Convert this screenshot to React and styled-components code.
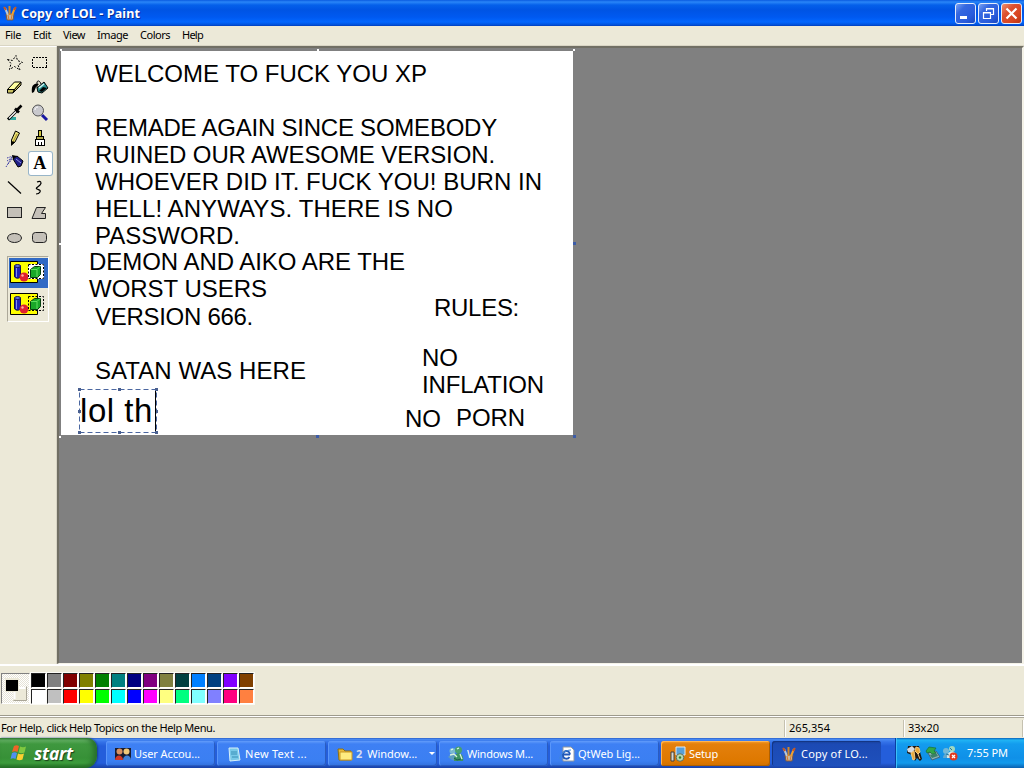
import React, { useLayoutEffect, useRef, useState } from 'react';
import styled, { createGlobalStyle, css } from 'styled-components';

const Global = createGlobalStyle`
  * { box-sizing: border-box; }
  body { margin: 0; overflow: hidden; background: #ece9d8; }
`;

const ui = '"Noto Sans", "Open Sans", sans-serif';

const LabelText = styled.span`
  display: inline-block;
  white-space: pre;
  flex: none;
`;

// Text tracked so that its advance equals a given width.
function Label({ w, children, ...rest }) {
  const ref = useRef(null);
  const [gap, setGap] = useState(0);
  useLayoutEffect(() => {
    const natural = ref.current.getBoundingClientRect().width;
    setGap((w - natural) / children.length);
  }, []);
  return <LabelText ref={ref} style={{ letterSpacing: gap }} {...rest}>{children}</LabelText>;
}

const Screen = styled.div`
  width: 1024px;
  height: 768px;
  display: flex;
  flex-direction: column;
  background: #ece9d8;
  font: 11px/14px ${ui};
  color: #000;
  overflow: hidden;
`;

const TitleBar = styled.header`
  height: 26px;
  flex: none;
  display: flex;
  align-items: center;
  padding: 0 2px 0 2px;
  background: linear-gradient(#0a5be0 0, #2a86f8 2px, #0560ea 5px, #0054e4 10px, #0059f0 17px, #0266fe 22px, #0050d8 25px, #003ab8 26px);
  color: #fff;
`;
const TitleText = styled.h1`
  flex: 1;
  margin: 0 0 0 3px;
  padding-top: 2px;
  font: bold 12.5px/20px "Noto Sans", "Open Sans", sans-serif;
  text-shadow: 1px 1px 0 #0a2c90;
`;
const TitleButton = styled.div`
  width: 21px;
  height: 21px;
  margin-left: 2px;
  border: 1px solid #e4ecfb;
  border-radius: 3px;
  background: ${(p) => (p.$close
    ? 'linear-gradient(135deg, #ee9070 0, #dc5030 35%, #d84520 70%, #b83412 100%)'
    : 'linear-gradient(135deg, #7aa2f4 0, #3568e0 30%, #2a5cdc 70%, #1a48c0 100%)')};
  svg { display: block; }
`;

const MenuBar = styled.nav`
  height: 20px;
  flex: none;
  display: flex;
  padding: 2px 0 0 5px;
  gap: 12px;
  border-bottom: 1px solid #d9d5c4;
`;

const Work = styled.div`
  height: 618px;
  flex: none;
  display: flex;
`;
const ToolBox = styled.aside`
  width: 57px;
  flex: none;
  padding: 4px 0 0 3px;
  border-top: 1px solid #fff;
  border-right: 1px solid #d8d4c4;
`;
const ToolGrid = styled.div`
  display: grid;
  grid-template-columns: 25px 25px;
  grid-auto-rows: 25px;
`;
const Tool = styled.div`
  border-radius: 3px;
  ${(p) => p.$active && css`
    background: #fff;
    box-shadow: inset 0 0 0 1px #98b5c8;
  `}
  svg { display: block; }
`;
const Options = styled.div`
  width: 42px;
  height: 66px;
  margin: 5px 0 0 4px;
  border: 1px solid;
  border-color: #aca899 #fff #fff #aca899;
  padding: 1px 0 0 1px;
`;
const Option = styled.div`
  height: 30px;
  margin-bottom: 2px;
  background: ${(p) => (p.$active ? '#316ac5' : 'transparent')};
  svg { display: block; }
`;

const Desk = styled.main`
  flex: 1;
  border-top: 2px solid #716f64;
  border-left: 2px solid #716f64;
  border-right: 2px solid #f4f2e8;
  border-bottom: 1px solid #f4f2e8;
  background: #808080;
  padding: 3px 0 0 2px;
`;
const Sheet = styled.div`
  position: relative;
  width: 512px;
  height: 384px;
  background: #fff;
  font: 24px/27px "Liberation Sans", Arial, sans-serif;
`;
const Placed = styled.div`
  position: absolute;
  left: ${(p) => p.$x - 61}px;
  top: ${(p) => p.$base - 73}px;
`;
const Big = styled(Placed)`
  font-size: 33px;
  line-height: 38px;
  top: 341px;
  left: 19px;
`;
const Caret = styled.i`
  position: absolute;
  left: 94px;
  top: 340px;
  width: 1px;
  height: 40px;
  background: #000;
`;
const Marquee = styled.div`
  position: absolute;
  left: 17px;
  top: 337px;
  width: 80px;
  height: 46px;
  svg { display: block; }
`;
const Handle = styled.i`
  position: absolute;
  left: ${(p) => p.$x - 61}px;
  top: ${(p) => p.$y - 51}px;
  width: ${(p) => (p.$blue ? 3 : 2)}px;
  height: ${(p) => (p.$blue ? 3 : 2)}px;
  background: ${(p) => (p.$blue ? '#3c5ca8' : '#fff')};
`;

const ColorBar = styled.section`
  height: 51px;
  flex: none;
  display: flex;
  border-top: 2px solid #fff;
  padding: 7px 0 0 1px;
`;
const Current = styled.div`
  width: 29px;
  height: 31px;
  border: 1px solid;
  border-color: #808080 #fff #fff #808080;
  background: repeating-conic-gradient(#fff 0 25%, #e6e3d6 0 50%) 0 0 / 2px 2px;
  svg { display: block; }
`;
const Swatches = styled.div`
  display: grid;
  grid-template-columns: repeat(14, 16px);
  grid-auto-rows: 16px;
  margin-left: 1px;
`;
const Swatch = styled.div`
  width: 15px;
  height: 15px;
  border: solid;
  border-width: 1px;
  border-color: #222 #fff #fff #222;
  background: ${(p) => p.$c};
  box-shadow: 0 0 0 1px #fbfaf5;
`;

const StatusBar = styled.footer`
  height: 23px;
  flex: none;
  display: flex;
  border-top: 1px solid #9d9a8c;
  box-shadow: inset 0 1px #fff, inset 0 2px #aca899;
  padding-top: 4px;
`;
const StatusCell = styled.div`
  width: ${(p) => p.$w}px;
  padding: 1px 0 0 ${(p) => p.$pad}px;
  border-right: 1px solid #c5c1b0;
  box-shadow: 1px 0 #fff;
  height: 17px;
`;

const TaskBar = styled.footer`
  height: 30px;
  flex: none;
  display: flex;
  background: linear-gradient(#1f50b8 0, #4a8cf4 1px, #3472e8 4px, #245edb 8px, #245edb 25px, #1941a5 30px);
  color: #fff;
`;
const Start = styled.div`
  width: 97px;
  display: flex;
  align-items: center;
  padding: 0 0 0 10px;
  border-radius: 0 10px 12px 0;
  background: linear-gradient(#2f7a30 0, #66b466 2px, #3f983f 6px, #379137 20px, #3c9c3c 25px, #1f6a20 30px);
  box-shadow: inset -4px 0 5px #28702c, 1px 0 2px #173c94;
`;
const StartText = styled.b`
  margin: -1px 0 0 6px;
  font: italic bold 17.5px/24px "Open Sans", "Noto Sans", sans-serif;
  text-shadow: 1px 1px 1px #1a401a;
`;
const Tasks = styled.div`
  flex: 1;
  display: flex;
  gap: 2px;
  padding: 3px 0 0 9px;
`;
const Task = styled.div`
  width: 109px;
  height: 25px;
  display: flex;
  align-items: center;
  padding-left: 9px;
  border-radius: 3px;
  white-space: nowrap;
  background: linear-gradient(#629cfa 0, #3e80f4 3px, #3b7ff2 20px, #3270dc 25px);
  box-shadow: inset -1px -1px #2a5cc0, inset 1px 0 #5a96fa;
  ${(p) => p.$kind === 'alert' && css`
    background: linear-gradient(#f8a030 0, #e4800c 3px, #de7800 20px, #d07000 25px);
    box-shadow: inset -1px -1px #b06000, inset 1px 1px #ffb450;
  `}
  ${(p) => p.$kind === 'active' && css`
    background: linear-gradient(#173f98 0, #1c4ab4 3px, #1e50bc 25px);
    box-shadow: inset 1px 1px #143684;
  `}
  svg { flex: none; margin-right: ${(p) => p.$gap ?? 3}px; }
`;
const Count = styled.span`
  color: #d5dcf0;
  font-weight: bold;
  margin-right: 5px;
`;
const Arrow = styled.i`
  margin-left: 12px;
  border: 3px solid transparent;
  border-top-color: #fff;
  border-bottom: 0;
`;
const Tray = styled.div`
  width: 129px;
  display: flex;
  align-items: center;
  gap: 2px;
  padding: 0 0 0 10px;
  border-left: 1px solid #0a3ea0;
  background: linear-gradient(#0c60b8 0, #20b4f4 2px, #139cee 6px, #0f90e8 20px, #129aec 25px, #0a60b0 30px);
  box-shadow: inset 1px 0 #3cc0f8;
`;
const Clock = styled.time`
  margin-left: 7px;
`;

const Svg = ({ s = 16, h, children, vb }) => (
  <svg width={s} height={h ?? s} viewBox={vb ?? `0 0 ${s} ${h ?? s}`} fill="none">{children}</svg>
);

const Brushes = () => (
  <Svg>
    <path d="M4 9h8l-1 6H5z" fill="#c4b8a0" stroke="#7d5a40" />
    <path d="M3 3l3 7" stroke="#b8c8d8" strokeWidth="2" />
    <path d="M7.5 1v9" stroke="#d08828" strokeWidth="2" />
    <path d="M13 3l-3 7" stroke="#f0a030" strokeWidth="2" />
    <path d="M2 2l2 3M12 5l2-3" stroke="#c85820" strokeWidth="2" />
    <path d="M6 10l1 5M10 10l-1 5" stroke="#e07828" />
  </Svg>
);

const Messenger = () => (
  <Svg>
    <circle cx="4.500" cy="5" r="3" fill="#78b8d0" />
    <path d="M0 11l4-4 4 2 1 6-5-1z" fill="#5c9cc0" />
    <circle cx="10.500" cy="4" r="3.500" fill="#48a070" />
    <path d="M10 7c4 0 6 4 5 8H6c0-4 1-7 4-8z" fill="#3c9460" />
    <path d="M2 9l4-1 3 3M12 8l2 5" stroke="#d8f0dc" strokeWidth="1.300" />
    <path d="M9 3l2-1M3 4l2-1" stroke="#e0f8e8" strokeWidth="1.300" />
    <path d="M6 12l3 2 4-1" stroke="#1c5c50" />
  </Svg>
);

const toolIcons = [
  <path d="M4.500 8.500l5 1 3.500-5 1.500 5 5 2-4.500 2.500 2 5-5.500-3.500-5 3 1.500-6z" stroke="#000" strokeDasharray="2 1.400" />,
  <rect x="4.500" y="6.500" width="14" height="10" stroke="#000" strokeDasharray="2 1" shapeRendering="crispEdges" />,
  <g stroke="#000" strokeLinejoin="round"><path d="M4.500 13.500l7-7.500h6.500l-6.500 7.500z" fill="#ffffa0" /><path d="M4.500 13.500v3.500h5.500l1.500-3.500zM11.500 13.500l6.500-7.500v3l-8 8z" fill="#c8c060" /></g>,
  <g><path d="M4 17c-1-8 2-10 7-9l-3 3-2 5z" fill="#000" /><path d="M9 12l7-6 4 6-6 5-4-1z" fill="#2a9494" stroke="#000" /><path d="M15 11l4 1-5 4-3-1z" fill="#000" /><path d="M11 12l5-4" stroke="#d8f4f0" strokeWidth="1.500" /><path d="M9 12V6c1-2 3-1 4 2" stroke="#000" /></g>,
  <g><path d="M5 17.500h8" stroke="#30a8a0" strokeWidth="3" /><path d="M5 18.500l9-9" stroke="#000" strokeWidth="3" /><path d="M6 17.500l7-7" stroke="#fff" strokeWidth="1.300" /><path d="M12 7.500l4 4M13.500 9.500l5-5" stroke="#000" strokeWidth="2.600" /></g>,
  <g><path d="M14 14l5 5" stroke="#1818a0" strokeWidth="3" /><circle cx="10" cy="9.500" r="5.500" fill="#c8c8cc" stroke="#555" /><path d="M7 9c0-2 1-3 3-3" stroke="#fff" /></g>,
  <g><path d="M8.500 14l4-9 4 2-4.500 9-3.500 3z" fill="#e8e078" stroke="#000" /><path d="M14 8l-4 8" stroke="#a89020" /><path d="M8 15l4 1-4 4z" fill="#000" /></g>,
  <g stroke="#000" shapeRendering="crispEdges"><path d="M10.500 4.500h3v6h-3z" fill="#d0c840" /><path d="M8.500 10.500h7v3h-7z" fill="#b0a850" /><path d="M7.500 13.500h9v6h-9z" fill="#fff" /><path d="M10.500 16v4M13.500 16v4" /></g>,
  <g><path d="M4 7l6-2M4 10l6-4M5 13l5-6M3 16l6-10" stroke="#4040a8" strokeDasharray="1.500 1" /><path d="M10 8l4-3 6 5-2 5-3 1z" fill="#202088" stroke="#000" /><path d="M13 8l5 4" stroke="#9090e0" /><path d="M9 4l5 1-4 3z" fill="#000" /></g>,
  <text x="5.200" y="18" fill="#000" fontFamily="Liberation Serif" fontWeight="bold" fontSize="18">A</text>,
  <path d="M5 5.500l13 12" stroke="#000" strokeWidth="1.200" />,
  <path d="M9 6c4-2 5 1 3 3s-5 3-3 4 4 1 3 3-2 2-4 2" stroke="#000" strokeWidth="1.200" />,
  <rect x="4.500" y="6.500" width="14" height="10" fill="#c4c0b8" stroke="#222" />,
  <path d="M8.500 6.500h9l-4 6h4v5h-13.500z" fill="#c4c0b8" stroke="#222" />,
  <ellipse cx="11.500" cy="12" rx="7" ry="4.500" fill="#c4c0b8" stroke="#222" />,
  <rect x="4.500" y="6.500" width="14" height="10" rx="3" fill="#c4c0b8" stroke="#222" />,
];

const OptionArt = ({ opaque }) => (
  <Svg s={40} h={30}>
    <path d="M1.500 3.500h27v21h-27z" fill="#ffff00" stroke="#000" />
    <path d="M5.500 8v10c0 3 6 3 6 0V8z" fill="#2020b8" stroke="#101050" />
    <path d="M7.500 9v10" stroke="#8090f0" />
    <ellipse cx="8.500" cy="8" rx="3" ry="1.500" fill="#6070e0" stroke="#101050" />
    <circle cx="15" cy="19" r="4.500" fill="#e02030" />
    <circle cx="13.500" cy="17.500" r="1.200" fill="#ffb0a0" />
    {opaque && <path d="M19 6h16v15H19z" fill="#fff" />}
    <path d="M19.500 6.500h15v14h-15z" stroke="#000" strokeDasharray="2 1.500" />
    <path d="M21.500 11.500l4-3h6v8l-3 3h-7z" fill="#18a828" stroke="#064010" />
    <path d="M22 11.500h6v7.500M28 11.500l3-3" stroke="#60e060" />
  </Svg>
);

const lines = [
  [95, 82, 332, 'WELCOME TO FUCK YOU XP'],
  [95, 136, 402, 'REMADE AGAIN SINCE SOMEBODY'],
  [95, 163, 400, 'RUINED OUR AWESOME VERSION.'],
  [95, 190, 447, 'WHOEVER DID IT. FUCK YOU! BURN IN'],
  [95, 217, 358, 'HELL! ANYWAYS. THERE IS NO'],
  [95, 244, 145, 'PASSWORD.'],
  [89, 270, 316, 'DEMON AND AIKO ARE THE'],
  [89, 297, 178, 'WORST USERS'],
  [95, 325, 158, 'VERSION 666.'],
  [95, 379, 211, 'SATAN WAS HERE'],
  [434, 316, 85, 'RULES:'],
  [422, 366, 36, 'NO'],
  [422, 393, 122, 'INFLATION'],
  [405, 427, 36, 'NO'],
  [456, 426, 69, 'PORN'],
];

const colors = ['#000', '#808080', '#800000', '#808000', '#008000', '#008080', '#000080', '#800080', '#808040', '#004040', '#0080ff', '#004080', '#8000ff', '#804000',
  '#fff', '#c0c0c0', '#f00', '#ff0', '#0f0', '#0ff', '#00f', '#f0f', '#ffff80', '#00ff80', '#80ffff', '#8080ff', '#ff0080', '#ff8040'];

const handles = [[60, 49], [317, 49], [573, 49], [59, 243], [573, 242, 1], [59, 436], [316, 435, 1], [573, 435, 1]];
const knobs = [[0, 0], [40, 0], [77, 0], [0, 22], [77, 22], [0, 43], [40, 43], [77, 43]];

export default function App() {
  return (
    <Screen>
      <Global />
      <TitleBar>
        <Brushes />
        <TitleText><Label w={119}>Copy of LOL - Paint</Label></TitleText>
        <TitleButton><Svg s={19}><path d="M4 13.500h7" stroke="#fff" strokeWidth="3" /></Svg></TitleButton>
        <TitleButton><Svg s={19}><path d="M7.500 7V4.500h7v6H12M7 5h8M4.500 8.500h7v6h-7zM4 9h8" stroke="#fff" strokeWidth="1.200" /></Svg></TitleButton>
        <TitleButton $close><Svg s={19}><path d="M4.500 4.500l10 10M14.500 4.500l-10 10" stroke="#fff" strokeWidth="2.200" /></Svg></TitleButton>
      </TitleBar>
      <MenuBar>
        <Label w={16}>File</Label>
        <Label w={18}>Edit</Label>
        <Label w={22}>View</Label>
        <Label w={31}>Image</Label>
        <Label w={30}>Colors</Label>
        <Label w={21}>Help</Label>
      </MenuBar>
      <Work>
        <ToolBox>
          <ToolGrid>
            {toolIcons.map((icon, i) => <Tool key={i} $active={i === 9}><Svg s={25}>{icon}</Svg></Tool>)}
          </ToolGrid>
          <Options>
            <Option $active><OptionArt opaque /></Option>
            <Option><OptionArt /></Option>
          </Options>
        </ToolBox>
        <Desk>
          <Sheet>
            {lines.map(([x, y, w, t]) => <Placed key={t + x} $x={x} $base={y}><Label w={w}>{t}</Label></Placed>)}
            <Marquee>
              <Svg s={80} h={46}>
                <path d="M1.500 1.500h77v43h-77z" stroke="#4a66a0" strokeDasharray="5 3" />
                {knobs.map(([x, y]) => <rect key={`${x}-${y}`} x={x} y={y} width="3" height="3" fill="#4a6090" />)}
              </Svg>
            </Marquee>
            <Big><Label w={73}>lol th</Label></Big>
            <Caret />
            {handles.map(([x, y, b]) => <Handle key={`${x}-${y}`} $x={x} $y={y} $blue={b} />)}
          </Sheet>
        </Desk>
      </Work>
      <ColorBar>
        <Current>
          <Svg s={27} h={29}>
            <path d="M11 13h13v14H11z" fill="#ece9d8" />
            <path d="M11.500 26.500h13v-14" stroke="#aaa698" />
            <path d="M12.500 25v-11h11" stroke="#fff" strokeWidth="2" />
            <path d="M3 4h14v14H3z" fill="#ece9d8" />
            <path d="M4 6h12v11H4z" fill="#000" />
          </Svg>
        </Current>
        <Swatches>{colors.map((c) => <Swatch key={c} $c={c} />)}</Swatches>
      </ColorBar>
      <StatusBar>
        <StatusCell $w={785} $pad={1}><Label w={214}>For Help, click Help Topics on the Help Menu.</Label></StatusCell>
        <StatusCell $w={119} $pad={4}><Label w={41}>265,354</Label></StatusCell>
        <StatusCell $w={119} $pad={4}><Label w={31}>33x20</Label></StatusCell>
      </StatusBar>
      <TaskBar>
        <Start>
          <Svg s={18}>
            <path d="M4 2c2-1 3-1 5 0L7.500 8c-2-1-3-1-5.500 0z" fill="#f06428" />
            <path d="M10 2.500c2 1 4 1 6 0L14.500 8.500c-2 1-4 1-6 0z" fill="#80c840" />
            <path d="M2 9c2-1 3-1 5 0l-1.500 6c-2-1-3-1-5 0z" fill="#5090f0" />
            <path d="M8 9.500c2 1 4 1 6 0l-1.500 6c-2 1-4 1-6 0z" fill="#fcd030" />
          </Svg>
          <StartText><Label w={39}>start</Label></StartText>
        </Start>
        <Tasks>
          <Task>
            <Svg>
              <path d="M0 2h16v12H0z" fill="#181c30" />
              <circle cx="4.500" cy="5.500" r="3" fill="#d89060" /><path d="M0 14c0-6 8-6 8 0z" fill="#d03828" />
              <circle cx="11.500" cy="5.500" r="3" fill="#f0c878" /><path d="M8 14c0-6 8-6 8 0z" fill="#4080d8" />
            </Svg>
            <Label w={66}>User Accou...</Label>
          </Task>
          <Task>
            <Svg><path d="M3 2h9l2 12-10 1z" fill="#78c8e8" stroke="#d8f0f8" /><path d="M5 6h6M5 8h6M6 11h6" stroke="#3890b8" /></Svg>
            <Label w={62}>New Text ...</Label>
          </Task>
          <Task>
            <Svg><path d="M1 3h5l2 2h6v9H2z" fill="#e8b838" stroke="#907010" /><path d="M3 6h12v8H3z" fill="#ffec80" stroke="#c89828" /></Svg>
            <Count>2</Count>
            <Label w={50}>Window...</Label>
            <Arrow />
          </Task>
          <Task><Messenger /><Label w={66}>Windows M...</Label></Task>
          <Task>
            <Svg><path d="M4 1h8l3 3v11H4z" fill="#fff" stroke="#9098a0" /><path d="M11 8.500H4a3.500 3.500 0 1 1 7 0M4 9.500c0 4 5 4 6.500 1.500" stroke="#2058b8" strokeWidth="1.800" /><path d="M1 13C0 9 6 4 12 4" stroke="#4088d8" /></Svg>
            <Label w={62}>QtWeb Lig...</Label>
          </Task>
          <Task $kind="alert">
            <Svg><path d="M6 1h9v8H6z" fill="#58a0d8" stroke="#e0e8f0" /><path d="M1 6h3v9H1z" fill="#d8d8d0" stroke="#404040" /><circle cx="10" cy="11.500" r="3.800" fill="#b8d8b0" stroke="#607060" /><circle cx="10" cy="11.500" r="1.200" fill="#308030" /></Svg>
            <Label w={29}>Setup</Label>
          </Task>
          <Task $kind="active" $gap={4}><Brushes /><Label w={67}>Copy of LO...</Label></Task>
        </Tasks>
        <Tray>
          <Svg><path d="M2 1h11l1 6 2 7-2 2-3-3-2 3-3-6-5-2z" fill="#201810" /><path d="M1 4l5-3 3 3-3 4-4-1z" fill="#d8dce0" /><path d="M5 8l3-2 1 8-2 1zM10 2l3 1 1 4-2 2-3-3zM12 9l2 5" fill="#e8a838" stroke="#f0c880" /></Svg>
          <Svg><path d="M4 8l8-2 4 6-8 3z" fill="#8cb4b8" stroke="#40687c" /><path d="M6 10l6-2 2 3-6 2z" fill="#3c8068" /><path d="M2 6l3-4 7 1-2 3 2 2-4 1-2-2-3 1z" fill="#30a848" stroke="#186828" strokeWidth=".6" /></Svg>
          <Svg><circle cx="4" cy="6" r="3" fill="#70b8d8" /><path d="M1 13c0-6 7-6 8 0z" fill="#60a8d0" /><circle cx="10" cy="4" r="3" fill="#a0d8c0" /><path d="M5 13c0-9 10-8 10 0z" fill="#d8ece8" /><path d="M4 9l3 1M8 3l2 2" stroke="#287898" /><circle cx="11.500" cy="11.500" r="4" fill="#e03820" /><path d="M10 10l3 3M13 10l-3 3" stroke="#fff" strokeWidth="1.300" /></Svg>
          <Clock><Label w={41}>7:55 PM</Label></Clock>
        </Tray>
      </TaskBar>
    </Screen>
  );
}
